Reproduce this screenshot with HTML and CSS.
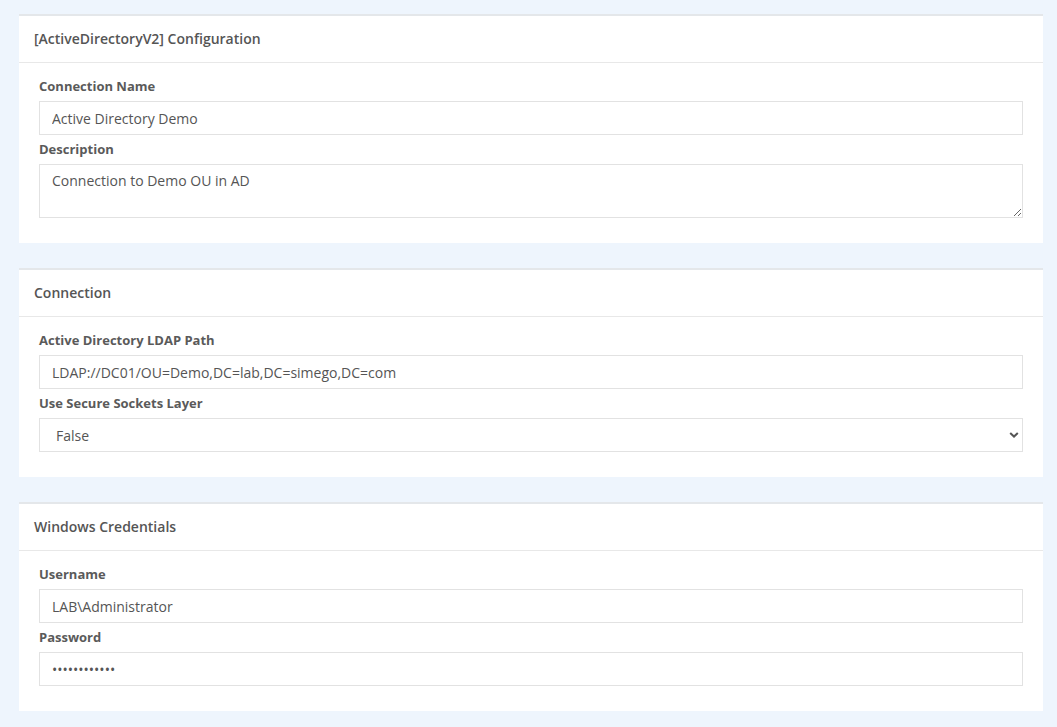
FILE: index.html
```html
<!DOCTYPE html>
<html>
<head>
<meta charset="utf-8">
<link rel="stylesheet" href="styles.css">
</head>
<body>
<div class="page">
  <section class="card">
    <div class="card-header">[ActiveDirectoryV2] Configuration</div>
    <div class="card-body">
      <div class="group">
        <label class="label">Connection Name</label>
        <input class="control" type="text" value="Active Directory Demo">
      </div>
      <div class="group">
        <label class="label">Description</label>
        <textarea class="control area">Connection to Demo OU in AD</textarea>
      </div>
    </div>
  </section>

  <section class="card">
    <div class="card-header">Connection</div>
    <div class="card-body">
      <div class="group">
        <label class="label">Active Directory LDAP Path</label>
        <input class="control" type="text" value="LDAP://DC01/OU=Demo,DC=lab,DC=simego,DC=com">
      </div>
      <div class="group">
        <label class="label">Use Secure Sockets Layer</label>
        <div class="select-wrap">
          <select class="control select">
            <option>False</option>
            <option>True</option>
          </select>
          <svg class="chev" width="10" height="8" viewBox="0 0 10 8"><path d="M1.2 2 L5 5.6 L8.8 2" fill="none" stroke="#555" stroke-width="2"/></svg>
        </div>
      </div>
    </div>
  </section>

  <section class="card">
    <div class="card-header">Windows Credentials</div>
    <div class="card-body">
      <div class="group">
        <label class="label">Username</label>
        <input class="control" type="text" value="LAB\Administrator">
      </div>
      <div class="group">
        <label class="label">Password</label>
        <input class="control" type="password" value="************">
      </div>
    </div>
  </section>
</div>
</body>
</html>
```
FILE: styles.css
```css
html, body {
  margin: 0;
  padding: 0;
  background: #eef5fd;
}
body {
  font-family: "Open Sans", "Liberation Sans", sans-serif;
  color: #555;
}
.page {
  padding: 14px 14px 0 19px;
  display: flex;
  flex-direction: column;
  gap: 25px;
}
.card {
  background: #fff;
  border-top: 2px solid #e4e7ea;
}
.card-header {
  height: 47px;
  box-sizing: border-box;
  padding: 0 15px 2px 15px;
  display: flex;
  align-items: center;
  font-size: 14px;
  font-weight: 600;
  color: #555;
  border-bottom: 1px solid #e8e8e8;
}
.card-body {
  padding: 14px 20px 25px 20px;
  display: flex;
  flex-direction: column;
  gap: 5px;
}
.group {
  display: flex;
  flex-direction: column;
}
.label {
  display: block;
  font-size: 13px;
  font-weight: 700;
  line-height: 19px;
  margin-bottom: 5px;
  color: #5a5a5a;
}
.control {
  box-sizing: border-box;
  width: 100%;
  height: 34px;
  padding: 0 12px;
  border: 1px solid #e2e2e2;
  border-radius: 0;
  background: #fff;
  font-family: "Open Sans", "Liberation Sans", sans-serif;
  font-size: 14px;
  color: #555;
  outline: none;
  margin: 0;
}
.area {
  height: 54px;
  padding: 6px 12px;
  line-height: 20px;
  resize: vertical;
  display: block;
}
.select-wrap {
  position: relative;
}
.select {
  -webkit-appearance: none;
  appearance: none;
  padding-left: 16px;
}
.chev {
  position: absolute;
  right: 4px;
  top: 13px;
  pointer-events: none;
}
```
